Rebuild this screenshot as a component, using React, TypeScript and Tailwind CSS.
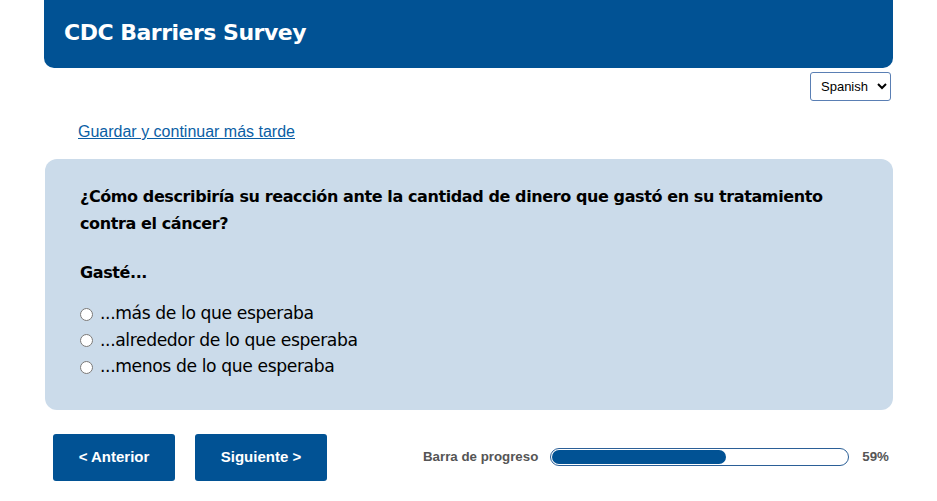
import React from "react";

const options = [
  "...más de lo que esperaba",
  "...alrededor de lo que esperaba",
  "...menos de lo que esperaba",
];

export default function App() {
  const progress = 59;
  return (
    <div className="min-h-[501px] w-[937px] bg-white font-['DejaVu_Sans',sans-serif]">
      <div className="mx-[44px] flex h-[68px] items-center rounded-b-[10px] bg-[#015294] px-[20px] pb-[4px]">
        <h1 className="text-[22px] font-bold tracking-[-0.5px] text-white">CDC Barriers Survey</h1>
      </div>

      <div className="mr-[46px] mt-[4px] flex justify-end">
        <select
          defaultValue="es"
          className="h-[29px] w-[81px] rounded-[3px] border border-[#5a7fb4] bg-white px-[6px] font-['Liberation_Sans',sans-serif] text-[13px] text-black"
        >
          <option value="en">English</option>
          <option value="es">Spanish</option>
        </select>
      </div>

      <div className="ml-[78px] mt-[19px]">
        <a href="#" className="font-['Liberation_Sans',sans-serif] text-[16px] text-[#0a5ea5] underline">
          Guardar y continuar más tarde
        </a>
      </div>

      <div className="ml-[45px] mr-[44px] mt-[15px] rounded-[12px] bg-[#cbdbea] px-[35px] pb-[29px] pt-[24px]">
        <p className="text-[16px] font-bold leading-[27px] tracking-[-0.4px] text-black">
          ¿Cómo describiría su reacción ante la cantidad de dinero que gastó en su tratamiento contra el cáncer?
        </p>
        <p className="mt-[22px] text-[16px] font-bold leading-[27px] tracking-[-0.4px] text-black">Gasté...</p>
        <div className="mt-[15px] flex flex-col">
          {options.map((o) => (
            <label key={o} className="flex h-[26.5px] items-center gap-[7px] text-[17.2px] tracking-[-0.4px] text-black">
              <input type="radio" name="gaste" className="m-0 h-[13px] w-[13px]" />
              <span>{o}</span>
            </label>
          ))}
        </div>
      </div>

      <div className="mt-[24px] flex items-center pl-[53px]">
        <button className="h-[47px] w-[122px] rounded-[3px] bg-[#015294] font-['Liberation_Sans',sans-serif] text-[15px] font-bold text-white">
          &lt; Anterior
        </button>
        <button className="ml-[20px] h-[47px] w-[132px] rounded-[3px] bg-[#015294] font-['Liberation_Sans',sans-serif] text-[15px] font-bold text-white">
          Siguiente &gt;
        </button>
        <div className="ml-[96px] flex items-center font-['Liberation_Sans',sans-serif]">
          <span className="text-[13.3px] font-bold text-[#555]">Barra de progreso</span>
          <div className="ml-[12px] h-[18px] w-[299px] rounded-full border border-[#2b5f97] bg-white p-[1px]">
            <div className="h-full rounded-full bg-[#015294]" style={{ width: `${progress}%` }} />
          </div>
          <span className="ml-[13px] text-[13.3px] font-bold text-[#555]">{progress}%</span>
        </div>
      </div>
    </div>
  );
}
